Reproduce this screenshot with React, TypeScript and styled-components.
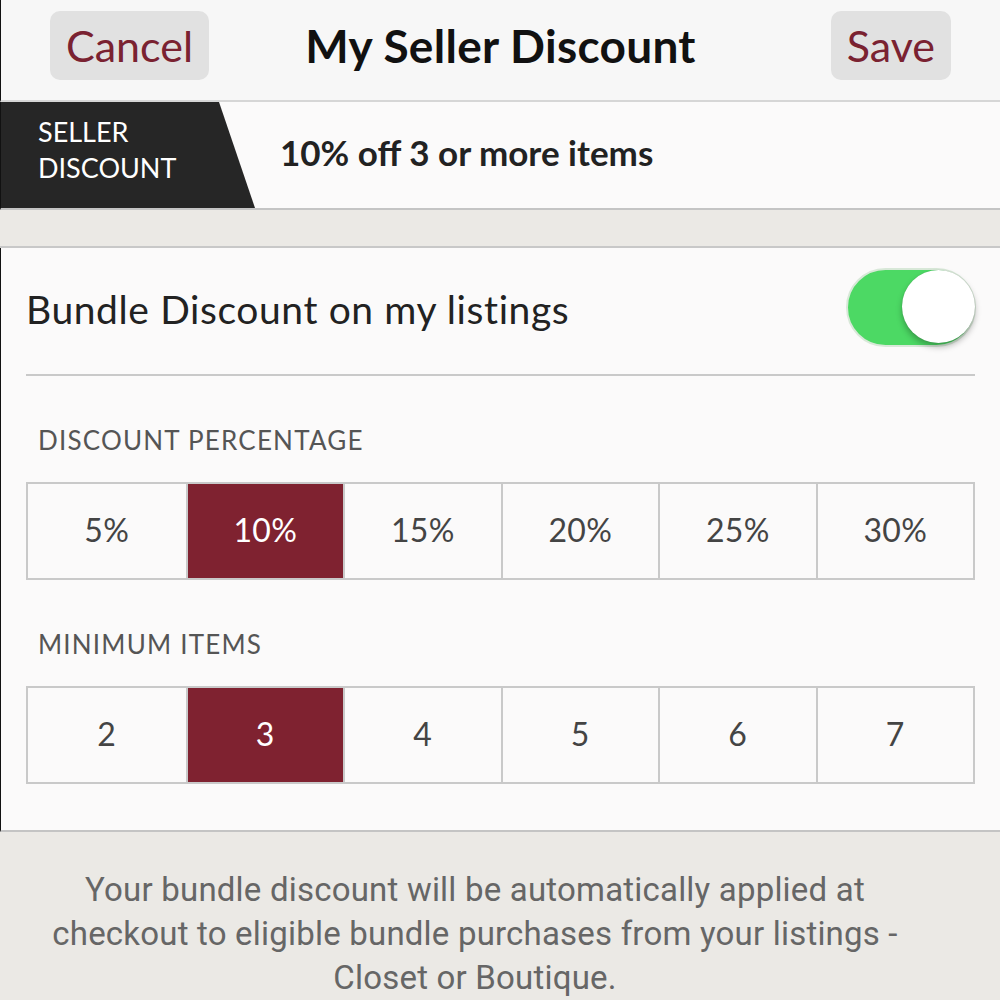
import { useState } from "react";
import styled, { createGlobalStyle } from "styled-components";

const GlobalStyle = createGlobalStyle`
  html, body {
    margin: 0;
    padding: 0;
    background: #ebe9e5;
  }
  body {
    font-family: Lato, "Open Sans", "Liberation Sans", sans-serif;
    -webkit-font-smoothing: antialiased;
  }
  * {
    box-sizing: border-box;
  }
`;

const Page = styled.div`
  width: 1000px;
  height: 1000px;
  overflow: hidden;
  display: flex;
  flex-direction: column;
  background: #ebe9e5;
`;

const NavBar = styled.header`
  height: 102px;
  flex-shrink: 0;
  display: grid;
  grid-template-columns: 1fr auto 1fr;
  align-items: start;
  padding: 11px 49px 0;
  background: #f7f7f7;
  border-left: 1px solid #111;
  border-bottom: 2px solid #d6d6d6;
`;

const NavButton = styled.button<{ $align: "start" | "end" }>`
  justify-self: ${(p) => p.$align};
  height: 69px;
  padding: 0 16px;
  border: none;
  border-radius: 10px;
  background: #e1e1e1;
  color: #7a2231;
  font-family: inherit;
  font-size: 43px;
  font-weight: 400;
  cursor: pointer;
`;

const Title = styled.h1`
  margin: 0;
  height: 69px;
  display: flex;
  align-items: center;
  font-size: 46px;
  font-weight: 700;
  color: #111;
  letter-spacing: 0.3px;
`;

const Banner = styled.section`
  height: 108px;
  flex-shrink: 0;
  display: flex;
  align-items: center;
  background: #fbfafa;
  border-left: 1px solid #111;
  border-bottom: 2px solid #c4c4c4;
`;

const Tag = styled.div`
  align-self: stretch;
  width: 254px;
  padding: 12px 0 0 37px;
  background: #262626;
  clip-path: polygon(0 0, 218px 0, 254px 100%, 0 100%);
  color: #fff;
  font-size: 27px;
  line-height: 36px;
  text-transform: uppercase;
`;

const Summary = styled.div`
  padding-left: 25px;
  margin-top: -6px;
  font-size: 35px;
  font-weight: 700;
  color: #222;
`;

const Gap = styled.div`
  height: 38px;
  flex-shrink: 0;
  background: #ebe9e5;
  border-bottom: 2px solid #c8c8c8;
`;

const Card = styled.section`
  height: 584px;
  flex-shrink: 0;
  padding: 0 25px;
  background: #fbfafa;
  border-left: 1px solid #111;
  border-bottom: 2px solid #c4c4c4;
`;

const ToggleRow = styled.div`
  height: 128px;
  display: flex;
  align-items: center;
  justify-content: space-between;
  border-bottom: 2px solid #c9c9c9;
`;

const ToggleLabel = styled.span`
  margin-top: -4px;
  font-size: 39px;
  letter-spacing: 0.6px;
  color: #222;
`;

const Switch = styled.button<{ $on: boolean }>`
  position: relative;
  width: 130px;
  height: 79px;
  margin-right: -1px;
  margin-top: -8px;
  padding: 0;
  border: 2px solid ${(p) => (p.$on ? "#d8e8d8" : "#e2e2e2")};
  border-radius: 40px;
  background: ${(p) => (p.$on ? "#4cd964" : "#fff")};
  cursor: pointer;
`;

const Knob = styled.span<{ $on: boolean }>`
  position: absolute;
  top: 0;
  ${(p) => (p.$on ? "right: -1px;" : "left: -1px;")}
  width: 73px;
  height: 73px;
  border-radius: 50%;
  background: #fff;
  box-shadow: 0 4px 6px rgba(0, 0, 0, 0.28), 0 0 1px rgba(0, 0, 0, 0.2);
`;

const SectionLabel = styled.div`
  padding: 48px 0 0 12px;
  height: 106px;
  font-size: 26px;
  letter-spacing: 1.2px;
  color: #555;
  text-transform: uppercase;
`;

const Segments = styled.div`
  display: grid;
  grid-template-columns: repeat(6, 1fr);
  height: 98px;
  border: 2px solid #c9c9c9;
`;

const Segment = styled.button<{ $active: boolean }>`
  display: flex;
  align-items: center;
  justify-content: center;
  padding: 0 0 4px;
  border: none;
  border-left: 2px solid #c9c9c9;
  background: ${(p) => (p.$active ? "#7f2230" : "#fbfafa")};
  color: ${(p) => (p.$active ? "#fff" : "#444")};
  font-family: inherit;
  font-size: 32px;
  letter-spacing: 0.3px;
  cursor: pointer;

  &:first-child {
    border-left: none;
  }
`;

const Note = styled.p`
  margin: 0;
  padding: 36px 50px 0 0;
  text-align: center;
  font-family: Roboto, "Liberation Sans", sans-serif;
  font-size: 33px;
  letter-spacing: 0.2px;
  line-height: 44px;
  color: #666;
`;

const percentages = [5, 10, 15, 20, 25, 30];
const minimums = [2, 3, 4, 5, 6, 7];

export default function App() {
  const [enabled, setEnabled] = useState(true);
  const [percent, setPercent] = useState(10);
  const [minItems, setMinItems] = useState(3);

  return (
    <Page>
      <GlobalStyle />
      <NavBar>
        <NavButton $align="start">Cancel</NavButton>
        <Title>My Seller Discount</Title>
        <NavButton $align="end">Save</NavButton>
      </NavBar>

      <Banner>
        <Tag>
          Seller
          <br />
          Discount
        </Tag>
        <Summary>
          {percent}% off {minItems} or more items
        </Summary>
      </Banner>

      <Gap />

      <Card>
        <ToggleRow>
          <ToggleLabel>Bundle Discount on my listings</ToggleLabel>
          <Switch $on={enabled} onClick={() => setEnabled(!enabled)}>
            <Knob $on={enabled} />
          </Switch>
        </ToggleRow>

        <SectionLabel>Discount Percentage</SectionLabel>
        <Segments>
          {percentages.map((p) => (
            <Segment key={p} $active={p === percent} onClick={() => setPercent(p)}>
              {p}%
            </Segment>
          ))}
        </Segments>

        <SectionLabel>Minimum Items</SectionLabel>
        <Segments>
          {minimums.map((n) => (
            <Segment key={n} $active={n === minItems} onClick={() => setMinItems(n)}>
              {n}
            </Segment>
          ))}
        </Segments>
      </Card>

      <Note>
        Your bundle discount will be automatically applied at
        <br />
        checkout to eligible bundle purchases from your listings -
        <br />
        Closet or Boutique.
      </Note>
    </Page>
  );
}
